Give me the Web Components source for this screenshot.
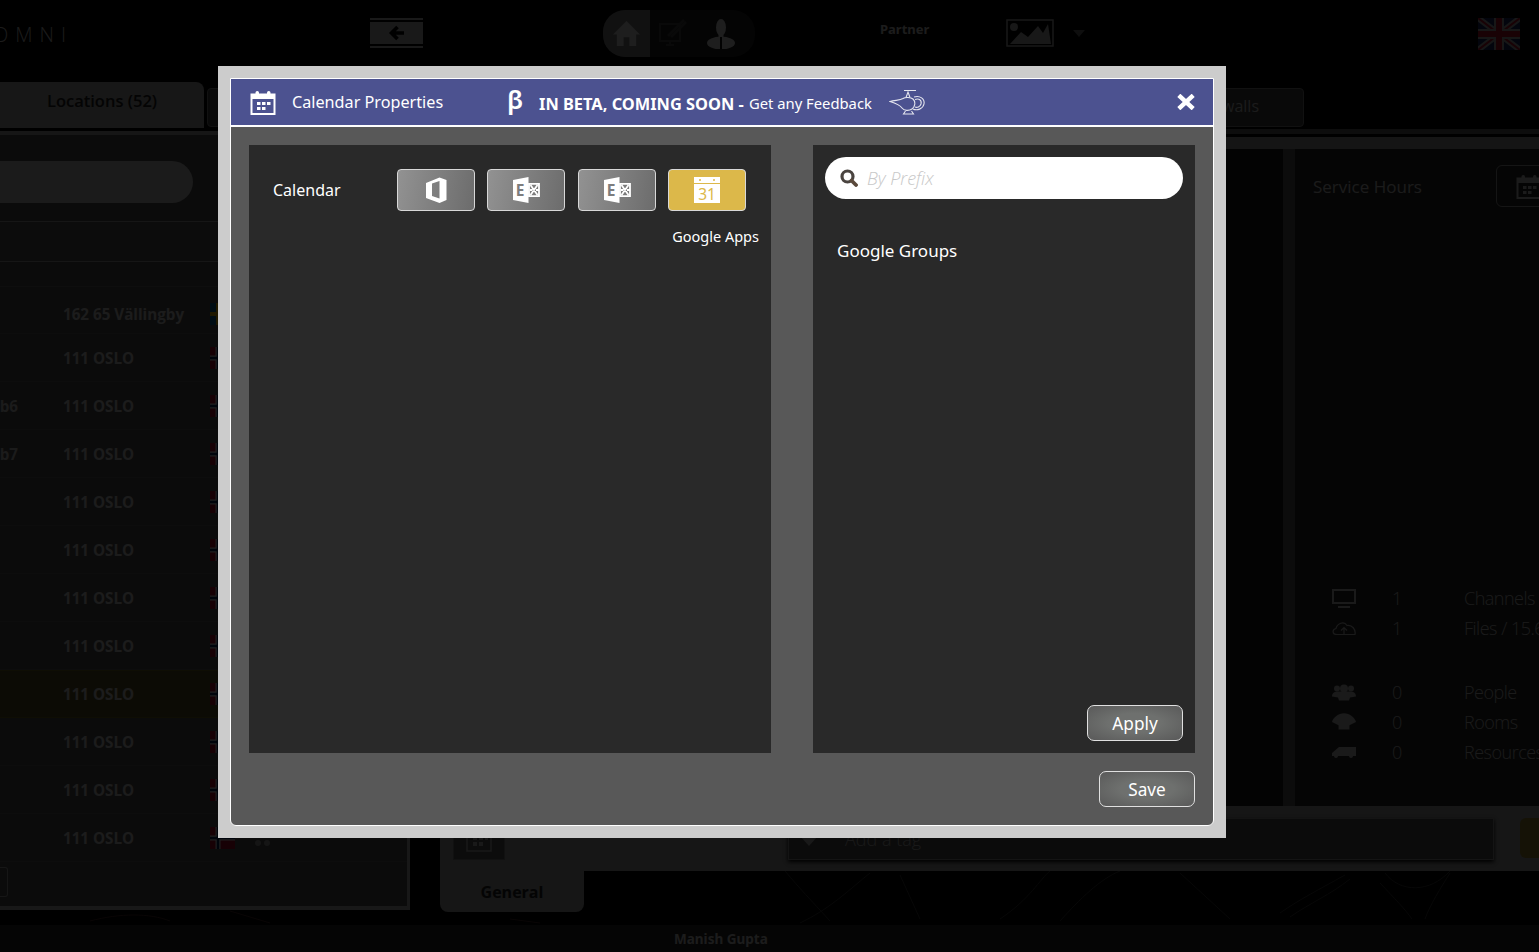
<!DOCTYPE html>
<html>
<head>
<meta charset="utf-8">
<title>Calendar Properties</title>
<style>
  html, body { margin: 0; height: 100%; background: #000; overflow: hidden; }
  body { font-family: "Open Sans", "Noto Sans", sans-serif; color: #fff; }
</style>
</head>
<body>
<omni-app>
  <omni-backdrop slot="art"></omni-backdrop>
  <omni-topbar slot="top"></omni-topbar>
  <omni-tabs slot="tabs"></omni-tabs>
  <location-list slot="left">
    <location-row zip="162 65 Vällingby" flag="se" first></location-row>
    <location-row zip="111 OSLO"></location-row>
    <location-row name="Lab6" zip="111 OSLO"></location-row>
    <location-row name="Lab7" zip="111 OSLO"></location-row>
    <location-row zip="111 OSLO"></location-row>
    <location-row zip="111 OSLO"></location-row>
    <location-row zip="111 OSLO"></location-row>
    <location-row zip="111 OSLO"></location-row>
    <location-row zip="111 OSLO" selected></location-row>
    <location-row zip="111 OSLO"></location-row>
    <location-row zip="111 OSLO"></location-row>
    <location-row zip="111 OSLO" dots></location-row>
  </location-list>
  <detail-pane slot="right"></detail-pane>
  <omni-footer slot="bottom"></omni-footer>
</omni-app>

<calendar-modal>
  <span slot="title">Calendar Properties</span>
  <provider-button icon="office"></provider-button>
  <provider-button icon="exchange"></provider-button>
  <provider-button icon="exchange"></provider-button>
  <provider-button icon="gcal" active></provider-button>
</calendar-modal>

<script>
const ICONS = {
  calendar: `<svg viewBox="0 0 26 25"><path fill="none" stroke="currentColor" stroke-width="2" d="M1.500 4.500h23v19.500h-23z"/><path fill="currentColor" d="M1 4h24v5H1z"/><rect x="5.500" y="1" width="3.500" height="6" rx="1.700" fill="currentColor"/><rect x="17" y="1" width="3.500" height="6" rx="1.700" fill="currentColor"/><path fill="currentColor" d="M7 12h3.500v3H7zM12 12h3.500v3H12zM17 12h3.500v3H17zM7 17h3.500v3H7zM12 17h3.500v3H12z"/></svg>`,
  lamp: `<svg viewBox="0 0 37 26" fill="none" stroke="currentColor" stroke-width="1.100"><path d="M1 12.500C6 11 11 11.500 14 9.500 16 8 22 8 24 10 27 13 26 18 23 20 20 22 15 22 13 19 11 16 6 14 1 12.500Z"/><path d="M17 8.500 19 3 21 8.500M15 1.500H27"/><path d="M25 8C31 6 36 10 35 15 34 20 28 22 24 20"/><path d="M26 10.500C30 9 33 11 32 15 31 18 28 19 26 18"/><path d="M16.500 22 14.500 25H24.500L22.500 22"/></svg>`,
  close: `<svg viewBox="0 0 18 16"><path d="M1.800 1.300 16.200 14.700M16.200 1.300 1.800 14.700" stroke="currentColor" stroke-width="4.400" fill="none"/></svg>`,
  search: `<svg viewBox="0 0 18 18" fill="none"><circle cx="7.500" cy="7.500" r="5.500" stroke="#4a4440" stroke-width="3.200"/><path d="M11.500 11.500 16 16" stroke="#5b4a3c" stroke-width="3.800" stroke-linecap="round"/></svg>`,
  office: `<svg viewBox="0 0 22 26"><path fill="currentColor" fill-rule="evenodd" d="M1 6 14.500 .5 21.500 3V23L14.500 26 1 21ZM14.500 4 7 6.500V19L14.500 21.500Z"/></svg>`,
  exchange: `<svg viewBox="0 0 27 26"><path fill="currentColor" d="M0 3 15.500 0V26L0 23Z"/><path fill="none" stroke="currentColor" stroke-width="1.800" d="M16 6.800h10v12.400H16zM17.500 8l7 10M24.500 8l-7 10M17 13h2.500M23 13h2.500"/><text x="2.800" y="18.500" font-family="Noto Sans, sans-serif" font-weight="700" font-size="15.500" fill="#7d7d7d">E</text></svg>`,
  gcal: `<svg viewBox="0 0 26 26"><path fill="currentColor" d="M0 0H26V6H0ZM0 7H26V26H0Z"/><circle cx="6" cy="3" r="1" fill="#dcb84a"/><circle cx="20" cy="3" r="1" fill="#dcb84a"/><text x="13" y="23" text-anchor="middle" font-family="Noto Sans, sans-serif" font-size="15.500" fill="#dcb84a">31</text></svg>`,
  home: `<svg viewBox="0 0 28 26"><path fill="currentColor" d="M14 0 28 14H24V26H17V17H11V26H4V14H0Z"/></svg>`,
  edit: `<svg viewBox="0 0 30 30" fill="none" stroke="currentColor" stroke-width="2"><path d="M2 5H22V22H2zM8 26H16M12 22V26"/><path d="M10 17 26 1M13 18 28 3" stroke-width="2.500"/></svg>`,
  person: `<svg viewBox="0 0 28 30"><ellipse cx="14" cy="8.500" rx="5" ry="8.500" fill="currentColor"/><rect x="11.500" y="14" width="5" height="6" fill="currentColor"/><ellipse cx="14" cy="24" rx="14" ry="6.500" fill="currentColor"/><path d="M14 18V30" stroke="#111" stroke-width="2"/></svg>`,
  back: `<svg viewBox="0 0 18 16" fill="none" stroke="#000" stroke-width="3.600"><path d="M9.500 2 3.500 8 9.500 14M4 8H16"/></svg>`,
  picture: `<svg viewBox="0 0 48 28"><path fill="none" stroke="currentColor" stroke-width="1.500" d="M1 1H47V27H1z"/><circle cx="8" cy="8" r="4" fill="currentColor"/><path fill="currentColor" d="M4 25 15 13 22 18 32 7 37 14 42 5 45 25Z"/></svg>`,
  uk: `<svg viewBox="0 0 42 32"><rect width="42" height="32" fill="#1a2a6c"/><path d="M0 0 42 32M42 0 0 32" stroke="#bbb" stroke-width="6"/><path d="M0 0 42 32M42 0 0 32" stroke="#c8102e" stroke-width="2"/><path d="M21 0V32M0 16H42" stroke="#bbb" stroke-width="10"/><path d="M21 0V32M0 16H42" stroke="#c8102e" stroke-width="6"/></svg>`,
  no: `<svg viewBox="0 0 25 22"><rect width="25" height="22" fill="#ba0c2f"/><path d="M8 0V22M0 11H25" stroke="#fff" stroke-width="5"/><path d="M8 0V22M0 11H25" stroke="#00205b" stroke-width="2.500"/></svg>`,
  se: `<svg viewBox="0 0 25 22"><rect width="25" height="22" fill="#006aa7"/><path d="M8 0V22M0 11H25" stroke="#fecc00" stroke-width="4"/></svg>`,
  monitor: `<svg viewBox="0 0 24 19" fill="none" stroke="currentColor" stroke-width="2"><path d="M1 1H23V14H1zM6 18H18"/></svg>`,
  cloud: `<svg viewBox="0 0 24 14" fill="none" stroke="currentColor" stroke-width="1.200"><path d="M5 13C0 13 0 8 4 7 5 2 12-1 15 4 20 3 24 8 23 13ZM12 13V6M9 9l3-3 3 3"/></svg>`,
  people: `<svg viewBox="0 0 24 16" fill="currentColor"><circle cx="5" cy="4" r="3"/><circle cx="19" cy="4" r="3"/><circle cx="12" cy="4" r="4"/><path d="M0 12C0 8 3 7 6 7H18C21 7 24 8 24 12L18 13 17 16H7L6 13Z"/></svg>`,
  rooms: `<svg viewBox="0 0 22 17" fill="currentColor"><path d="M11 0C16 0 21 4 22 8L16 11V15H6V11L0 8C1 4 6 0 11 0Z"/></svg>`,
  van: `<svg viewBox="0 0 24 11" fill="currentColor"><path d="M7 0H24V9H0V6ZM4 11a2 2 0 1 1 .01 0ZM19 11a2 2 0 1 1 .01 0Z"/></svg>`,
  tag: `<svg viewBox="0 0 16 16" fill="currentColor"><path d="M0 0H16V6L8 15 0 6Z"/></svg>`,
  grid: `<svg viewBox="0 0 26 25"><path fill="none" stroke="currentColor" stroke-width="1.500" d="M1 4H25V24H1z"/><path fill="currentColor" d="M7 9h4v4H7zM13 9h4v4h-4zM7 15h4v4H7zM13 15h4v4h-4zM19 9h3v4h-3z"/></svg>`
};

class OmniIcon extends HTMLElement {
  constructor() {
    super();
    this.attachShadow({ mode: 'open' }).innerHTML = `
      <style>
        :host { display: inline-flex; width: var(--w, 24px); height: var(--h, 24px); flex: none; }
        svg { width: 100%; height: 100%; display: block; }
      </style>${ICONS[this.getAttribute('name')] || ''}`;
  }
}
customElements.define('omni-icon', OmniIcon);

class OmniApp extends HTMLElement {
  constructor() {
    super();
    this.attachShadow({ mode: 'open' }).innerHTML = `
      <style>
        :host { display: grid; width: 1539px; height: 952px; overflow: hidden;
          grid-template-columns: 410px 1fr; grid-template-rows: 82px 47px 796px 27px;
          column-gap: 30px; background: #000; }
        ::slotted([slot=top]) { grid-column: 1 / -1; grid-row: 1; }
        ::slotted([slot=tabs]) { grid-column: 1 / -1; grid-row: 2; }
        ::slotted([slot=art]) { grid-column: 1 / -1; grid-row: 3; align-self: end; }
        ::slotted([slot=left]) { grid-column: 1; grid-row: 3; }
        ::slotted([slot=right]) { grid-column: 2; grid-row: 3; min-width: 0; }
        ::slotted([slot=bottom]) { grid-column: 1 / -1; grid-row: 4; }
      </style>
      <slot name="art"></slot><slot name="top"></slot><slot name="tabs"></slot>
      <slot name="left"></slot><slot name="right"></slot><slot name="bottom"></slot>`;
  }
}
customElements.define('omni-app', OmniApp);

class OmniBackdrop extends HTMLElement {
  constructor() {
    super();
    this.attachShadow({ mode: 'open' }).innerHTML = `
      <style>
        :host { display: block; height: 56px; }
        svg { display: block; width: 100%; height: 100%; }
      </style>
      <svg viewBox="0 0 1539 56" fill="none" stroke="#3a3a3a" stroke-width="1">
        <path d="M785 2C800 20 810 30 830 52M870 4C850 20 830 40 800 54M900 6 920 50M1000 50C1030 30 1040 10 1050 2"/>
        <path d="M1060 52C1080 30 1100 10 1120 2M1180 4 1230 50M1280 44C1300 30 1320 20 1345 6M1290 48C1310 34 1330 26 1350 10"/>
        <path d="M1385 4C1400 24 1430 24 1450 2M1380 14C1395 30 1405 40 1412 50M1450 4C1440 20 1430 36 1425 50"/>
        <path d="M90 52C120 44 150 44 170 52M510 50 540 54M230 42 270 54" stroke="#4a2a2a"/>
      </svg>`;
  }
}
customElements.define('omni-backdrop', OmniBackdrop);

class OmniTopbar extends HTMLElement {
  constructor() {
    super();
    this.attachShadow({ mode: 'open' }).innerHTML = `
      <style>
        :host { display: flex; align-items: flex-start; color: #c8c8c8; }
        .brand { width: 377px; margin-left: -7px; margin-top: 21px; font: 300 20px "Open Sans", sans-serif; letter-spacing: 7px; color: #d8d8d8; }
        .back { width: 53px; height: 30px; margin-top: 18px; box-sizing: border-box; border-top: 2px solid #c8c8c8; border-bottom: 2px solid #c8c8c8; padding: 2px 0; }
        .back div { height: 22px; background: #c8c8c8; display: flex; align-items: center; justify-content: center; --w: 18px; --h: 16px; }
        .nav { display: flex; margin: 10px 0 0 180px; width: 152px; height: 47px; border-radius: 22px; background: #222; overflow: hidden; }
        .nav div { display: flex; align-items: center; justify-content: center; }
        .home { width: 47px; background: #8e8e8e; --w: 27px; --h: 25px; color: #f0f0f0; }
        .edit { width: 46px; --w: 30px; --h: 30px; color: #4a4a4a; }
        .user { width: 50px; --w: 28px; --h: 30px; color: #f0f0f0; }
        .partner { margin: 20px 0 0 125px; width: 126px; font: 700 13px "Noto Sans", sans-serif; color: #e0e0e0; }
        .pic { margin-top: 19px; --w: 48px; --h: 28px; color: #c0c0c0; }
        .caret { margin: 30px 0 0 19px; width: 0; height: 0; border: 6px solid transparent; border-top: 7px solid #707070; border-bottom: 0; }
        .flag { margin: 18px 0 0 393px; --w: 42px; --h: 32px; }
      </style>
      <div class="brand">OMNI</div>
      <div class="back"><div><omni-icon name="back"></omni-icon></div></div>
      <div class="nav">
        <div class="home"><omni-icon name="home"></omni-icon></div>
        <div class="edit"><omni-icon name="edit"></omni-icon></div>
        <div class="user"><omni-icon name="person"></omni-icon></div>
      </div>
      <div class="partner">Partner</div>
      <omni-icon class="pic" name="picture"></omni-icon>
      <div class="caret"></div>
      <omni-icon class="flag" name="uk"></omni-icon>`;
  }
}
customElements.define('omni-topbar', OmniTopbar);

class OmniTabs extends HTMLElement {
  constructor() {
    super();
    this.attachShadow({ mode: 'open' }).innerHTML = `
      <style>
        :host { display: flex; align-items: flex-start; font: 600 16.500px "Open Sans", sans-serif; color: #fff; }
        .loc { width: 204px; height: 46px; box-sizing: border-box; padding-top: 7px; border-radius: 0 8px 0 0; background: #b8b8b8; text-align: center; color: #222; }
        .other { margin: 6px 0 0 3px; width: 1097px; height: 39px; box-sizing: border-box; border: 1px solid #888; border-radius: 4px; background: #4a4a4a; text-align: right; padding: 6px 44px 0 0; font-weight: 400; font-size: 16px; color: #ddd; }
      </style>
      <div class="loc">Locations (52)</div>
      <div class="other">Firewalls</div>`;
  }
}
customElements.define('omni-tabs', OmniTabs);

class LocationList extends HTMLElement {
  constructor() {
    super();
    this.attachShadow({ mode: 'open' }).innerHTML = `
      <style>
        :host { display: flex; flex-direction: column; height: 779px; margin-top: 2px; box-sizing: border-box;
          background: #585858; border-top: 4px solid #b0b0b0; border-right: 3px solid #c0c0c0; border-bottom: 4px solid #c0c0c0; }
        .search { margin: 26px 0 18px -20px; width: 213px; height: 42px; border-radius: 21px; background: #d8d8d8; flex: none; }
        .head { height: 39px; flex: none; border-top: 1px solid #b0b0b0; border-bottom: 1px solid #b0b0b0; background: #606060; }
        .gap { height: 24px; flex: none; border-bottom: 1px solid #707070; }
        .foot { margin-top: 5px; width: 7px; height: 28px; border: 1px solid #b0b0b0; border-left: 0; border-radius: 0 3px 3px 0; }
      </style>
      <div class="search"></div>
      <div class="head"></div>
      <div class="gap"></div>
      <slot></slot>
      <div class="foot"></div>`;
  }
}
customElements.define('location-list', LocationList);

class LocationRow extends HTMLElement {
  constructor() {
    super();
    const flag = this.getAttribute('flag') || 'no';
    const sel = this.hasAttribute('selected');
    const first = this.hasAttribute('first');
    const dots = this.hasAttribute('dots') ? '<div class="dots"><i></i><i></i></div>' : '';
    this.attachShadow({ mode: 'open' }).innerHTML = `
      <style>
        :host { display: flex; align-items: center; flex: none; box-sizing: border-box; height: ${first ? 47 : 48}px; ${first ? 'padding-top:8px;' : ''}
          font: 700 15.200px "Open Sans", sans-serif; color: #e4e4e4;
          border-bottom: 1px solid ${sel ? '#7a7420' : '#6c6c6c'}; ${sel ? 'background:#655f2c; border-top:1px solid #7a7420;' : ''} }
        .name { width: 18px; direction: rtl; overflow: hidden; white-space: nowrap; color: #d8d8d8; }
        .zip { margin-left: 45px; width: 147px; white-space: nowrap; }
        omni-icon { --w: 25px; --h: 22px; }
        .dots { display: flex; gap: 3px; margin-left: 20px; margin-top: 10px; }
        .dots i { width: 6px; height: 6px; border-radius: 50%; background: #aaa; }
      </style>
      <div class="name">${this.getAttribute('name') || ''}</div>
      <div class="zip">${this.getAttribute('zip')}</div>
      <omni-icon name="${flag}"></omni-icon>${dots}`;
  }
}
customElements.define('location-row', LocationRow);

class StatRow extends HTMLElement {
  constructor() {
    super();
    this.attachShadow({ mode: 'open' }).innerHTML = `
      <style>
        :host { display: flex; align-items: center; height: 30px; margin-left: 37px; width: 300px; white-space: nowrap;
          font: 300 18px "Open Sans", sans-serif; letter-spacing: -.5px; color: #d8d8d8; }
        .i { width: 60px; display: flex; --w: 24px; --h: 19px; color: #d0d0d0; }
        .n { width: 72px; }
      </style>
      <div class="i"><omni-icon name="${this.getAttribute('icon')}"></omni-icon></div>
      <div class="n">${this.getAttribute('n')}</div>
      <div><slot></slot></div>`;
  }
}
customElements.define('stat-row', StatRow);

class DetailPane extends HTMLElement {
  constructor() {
    super();
    this.attachShadow({ mode: 'open' }).innerHTML = `
      <style>
        :host { display: flex; flex-direction: column; height: 796px; font: 400 18px "Open Sans", sans-serif; color: #ddd; }
        .s1 { height: 5px; background: #6e6e6e; margin-bottom: 3px; flex: none; }
        .s2 { height: 12px; background: #a8a8a8; flex: none; }
        .main { display: flex; height: 657px; flex: none; }
        .content { flex: 1; background: #1a1a1a; }
        .strip { width: 12px; flex: none; background: #606060; }
        .service { width: 244px; flex: none; background: #2c2c2c; overflow: hidden; }
        .sh { display: flex; align-items: center; margin: 16px 0 0 18px; height: 42px; font-size: 17px; }
        .sh span { width: 183px; flex: none; white-space: nowrap; }
        .sh div { width: 60px; height: 42px; box-sizing: border-box; border: 1px solid #aaa; border-radius: 6px; padding: 8px 0 0 19px; --w: 26px; --h: 25px; color: #ddd; flex: none; }
        .stats1 { margin-top: 376px; }
        .stats2 { margin-top: 34px; }
        .band { display: flex; height: 65px; flex: none; padding-top: 12px; box-sizing: border-box; background: #b0b0b0; overflow: hidden; }
        .gbox { margin-left: 13px; width: 52px; height: 42px; flex: none; box-sizing: border-box; background: #606060; border: 1px solid #888; padding: 8px 0 0 12px; --w: 26px; --h: 25px; color: #c8c8c8; }
        .tag { margin-left: 283px; width: 706px; height: 42px; flex: none; box-sizing: border-box; background: #5c5c5c; border: 1px solid #a0a0a0;
          display: flex; align-items: center; padding-left: 12px; gap: 28px; font-weight: 300; color: #ccc; --w: 16px; --h: 16px; box-shadow: 0 2px 4px #000; }
        .yes { margin-left: 26px; width: 60px; height: 40px; flex: none; background: #a89030; border-radius: 6px 0 0 6px; }
        .lower { height: 41px; flex: none; width: 144px; box-sizing: border-box; background: #b0b0b0; border-radius: 0 0 8px 8px; text-align: center; padding-top: 10px; font-weight: 700; color: #222; font-size: 16px; }
      </style>
      <div class="s1"></div>
      <div class="s2"></div>
      <div class="main">
        <div class="content"></div>
        <div class="strip"></div>
        <div class="service">
          <div class="sh"><span>Service Hours</span><div><omni-icon name="calendar"></omni-icon></div></div>
          <div class="stats1">
            <stat-row icon="monitor" n="1">Channels</stat-row>
            <stat-row icon="cloud" n="1">Files / 15.6 MB</stat-row>
          </div>
          <div class="stats2">
            <stat-row icon="people" n="0">People</stat-row>
            <stat-row icon="rooms" n="0">Rooms</stat-row>
            <stat-row icon="van" n="0">Resources</stat-row>
          </div>
        </div>
      </div>
      <div class="band">
        <div class="gbox"><omni-icon name="grid"></omni-icon></div>
        <div class="tag"><omni-icon name="tag"></omni-icon><span>Add a tag</span></div>
        <div class="yes"></div>
      </div>
      <div class="lower">General</div>`;
  }
}
customElements.define('detail-pane', DetailPane);

class OmniFooter extends HTMLElement {
  constructor() {
    super();
    this.attachShadow({ mode: 'open' }).innerHTML = `
      <style>
        :host { display: block; background: #2a2a2a; height: 27px; box-sizing: border-box; padding: 5px 0 0 674px; font: 700 13.500px "Noto Sans", sans-serif; color: #e0e0e0; }
      </style>Manish Gupta`;
  }
}
customElements.define('omni-footer', OmniFooter);

class ProviderButton extends HTMLElement {
  constructor() {
    super();
    const icon = this.getAttribute('icon');
    const size = icon === 'exchange' ? '--w:27px;--h:26px' : icon === 'office' ? '--w:22px;--h:26px' : '--w:26px;--h:26px';
    this.attachShadow({ mode: 'open' }).innerHTML = `
      <style>
        :host { display: flex; align-items: center; justify-content: center; width: 78px; height: 42px; box-sizing: border-box;
          border: 1px solid #d8d8d8; border-radius: 4px; color: #fff; background: linear-gradient(100deg, #929292, #6c6c6c); }
        :host([active]) { background: #dcb84a; }
      </style>
      <omni-icon name="${icon}" style="${size}"></omni-icon>`;
  }
}
customElements.define('provider-button', ProviderButton);

class PillButton extends HTMLElement {
  constructor() {
    super();
    this.attachShadow({ mode: 'open' }).innerHTML = `
      <style>
        :host { display: flex; align-items: center; justify-content: center; width: 96px; height: 36px; box-sizing: border-box;
          border: 1px solid #e0e0e0; border-radius: 7px; color: #fff; font-size: 17.200px;
          background: radial-gradient(ellipse at center, #6e706e 40%, #595959 100%); }
      </style><slot></slot>`;
  }
}
customElements.define('pill-button', PillButton);

class CalendarModal extends HTMLElement {
  constructor() {
    super();
    this.attachShadow({ mode: 'open' }).innerHTML = `
      <style>
        :host { position: fixed; inset: 0; background: rgba(0, 0, 0, .88); font-family: "Noto Sans", "Open Sans", sans-serif; color: #fff; }
        .frame { position: absolute; left: 218px; top: 66px; width: 1008px; height: 772px; box-sizing: border-box; padding: 12px; background: #ccc; }
        .box { display: flex; flex-direction: column; height: 100%; box-sizing: border-box; border: 1px solid #fff; border-radius: 0 0 6px 6px;
          background: #585858; overflow: hidden; }
        header { display: flex; align-items: center; height: 46px; flex: none; background: #4c5290; border-bottom: 2px solid #fff; }
        .cal { margin-left: 19px; --w: 26px; --h: 25px; }
        .title { margin: -1px 0 0 16px; width: 215px; font-size: 16.200px; }
        .beta { width: 32px; font: 600 26px "Noto Sans", sans-serif; margin-top: -6px; }
        .soon { font-weight: 700; font-size: 16.400px; margin-top: 2px; }
        .fb { margin: 1px 0 0 5px; font-size: 14.800px; }
        .lamp { margin-left: 17px; --w: 37px; --h: 26px; opacity: .85; }
        .close { margin-left: auto; margin-right: 18px; --w: 18px; --h: 16px; }
        main { display: grid; grid-template-columns: 522px 382px; column-gap: 42px; padding: 18px 18px 0; height: 608px; flex: none; box-sizing: content-box; }
        .panel { background: #292929; height: 608px; box-sizing: border-box; }
        .left { padding: 24px 12px 0 24px; }
        .row { display: flex; align-items: center; height: 42px; font-size: 16px; }
        .row span { width: 124px; }
        .btns { display: flex; gap: 12px; }
        ::slotted(provider-button:nth-of-type(3)) { margin-left: 1px; }
        .hint { text-align: right; margin-top: 15px; font-size: 14.500px; }
        .right { display: flex; flex-direction: column; padding: 12px; }
        .search { display: flex; align-items: center; height: 42px; flex: none; border-radius: 21px; background: #fff; padding-left: 15px; gap: 9px; --w: 18px; --h: 18px;
          font: italic 300 18px "Open Sans", sans-serif; color: #c8c8c8; }
        .groups { margin: 40px 0 0 12px; font-size: 17px; line-height: 24px; }
        .apply { align-self: flex-end; margin-top: auto; }
        footer { display: flex; justify-content: flex-end; padding: 18px 18px 0; }
      </style>
      <div class="frame"><div class="box">
        <header>
          <omni-icon class="cal" name="calendar"></omni-icon>
          <div class="title"><slot name="title"></slot></div>
          <div class="beta">&beta;</div>
          <div class="soon">IN BETA, COMING SOON -</div>
          <div class="fb">Get any Feedback</div>
          <omni-icon class="lamp" name="lamp"></omni-icon>
          <omni-icon class="close" name="close"></omni-icon>
        </header>
        <main>
          <section class="panel left">
            <div class="row"><span>Calendar</span><div class="btns"><slot></slot></div></div>
            <div class="hint">Google Apps</div>
          </section>
          <section class="panel right">
            <div class="search"><omni-icon name="search"></omni-icon><span>By Prefix</span></div>
            <div class="groups">Google Groups</div>
            <pill-button class="apply">Apply</pill-button>
          </section>
        </main>
        <footer><pill-button>Save</pill-button></footer>
      </div></div>`;
  }
}
customElements.define('calendar-modal', CalendarModal);
</script>
</body>
</html>
